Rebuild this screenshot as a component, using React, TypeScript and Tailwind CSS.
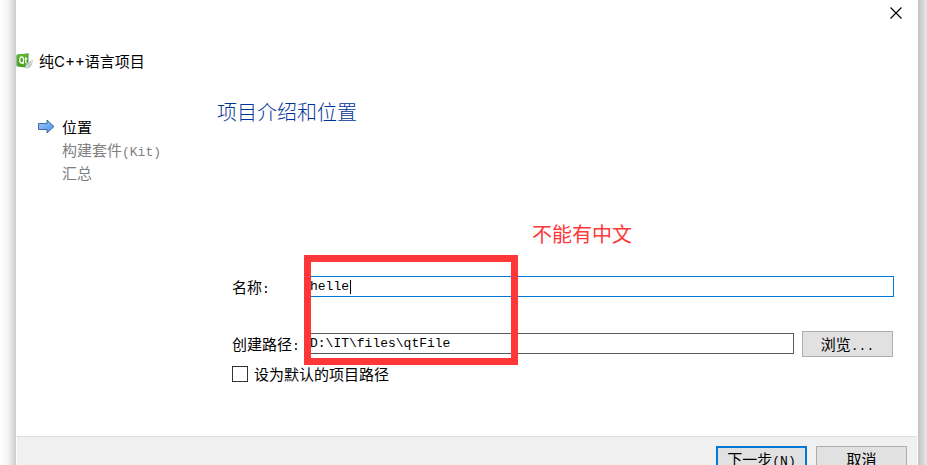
import type { ReactNode } from "react";
import clsx from "clsx";

function Mono({ children }: { children: ReactNode }) {
  return <span className="font-['Liberation_Mono',monospace] text-[13px] leading-none">{children}</span>;
}

function QtIcon() {
  return (
    <svg width="17" height="16" viewBox="0 0 17 16" aria-hidden>
      <path d="M1.500 1.500 12.500.5v10.500L9 14.500l-7.500-1z" fill="#45a51c" />
      <path d="M.5 2.500 1.500 1.500v12l-1-.5z" fill="#2d7d12" />
      <path d="M1.500 1.500 12.500.5v2l-11 2z" fill="#5cb62e" />
      <ellipse cx="5.700" cy="7" rx="1.900" ry="3.200" fill="none" stroke="#fff" strokeWidth="1.300" />
      <path d="m6 9 1.600 2.200M9.800 3.800v5.400q0 .9 1.200.8M8.700 5.800h2.600" fill="none" stroke="#fff" strokeWidth="1.200" />
      <path d="M16.800 6.500c-3 2-7 3.500-7.500 6.500-.2 1.600 1 2.700 2.500 2.400 3.300-.6 4.800-4.400 5-8.900z" fill="#c4c4c4" />
      <path d="M16.300 7.500c-1.500 3-3.500 5-6 6.800" fill="none" stroke="#ececec" />
    </svg>
  );
}

function ArrowIcon() {
  return (
    <svg width="17" height="15" viewBox="0 0 17 15" aria-hidden>
      <defs>
        <linearGradient id="arrow" x1="0" x2="1" y1="0" y2="1">
          <stop offset="0" stopColor="#9fccfa" />
          <stop offset="1" stopColor="#438ceb" />
        </linearGradient>
      </defs>
      <path d="M.5 4.500h8.500v-3.500l7 6.500-7 6.500v-3.500h-8.500z" fill="url(#arrow)" stroke="#44699c" />
    </svg>
  );
}

const steps = [
  { label: "位置", active: true },
  { label: "构建套件", suffix: "(Kit)" },
  { label: "汇总" },
];

const button = "h-[26px] w-[91px] shrink-0 bg-[#e1e1e1] text-center leading-5";
const input = "h-[21px] min-w-0 border bg-white px-[3px] font-['Liberation_Mono',monospace] text-[13px] outline-none";

export default function App() {
  return (
    <div className="flex h-screen overflow-hidden bg-white font-['Noto_Sans_CJK_SC',sans-serif] text-[15px] leading-[23px] text-black">
      <div className="w-4 shrink-0 bg-linear-to-r from-white via-[#f3f3f3] to-[#cdcdcd]" />

      <div className="flex min-w-0 flex-1 flex-col">
        <div className="flex h-12 shrink-0 items-start justify-end px-4 pt-[7px]">
          <button type="button" aria-label="关闭">
            <svg width="12" height="12" viewBox="0 0 12 12" className="block">
              <path d="m.5.500 11 11m0-11-11 11" stroke="#000" strokeWidth="1.200" />
            </svg>
          </button>
        </div>

        <header className="flex h-[26px] shrink-0 items-center gap-[6px]">
          <QtIcon />
          <h1 className="font-['Inter','Noto_Sans_CJK_SC',sans-serif] whitespace-nowrap">纯C++语言项目</h1>
        </header>

        <main className="flex h-[362px] shrink-0 pr-6">
          <ul className="w-[201px] shrink-0 pt-[41px] pl-[22px]">
            {steps.map((step) => (
              <li key={step.label} className={clsx("flex h-[23px] items-center gap-2", step.active ? "text-black" : "text-[#808080]")}>
                <span className="w-4 shrink-0">{step.active && <ArrowIcon />}</span>
                <span className="whitespace-nowrap">
                  {step.label}
                  {step.suffix && <Mono>{step.suffix}</Mono>}
                </span>
              </li>
            ))}
          </ul>

          <section className="min-w-0 flex-1 pt-6">
            <h2 className="text-xl leading-7 font-light text-[#003399]">项目介绍和位置</h2>

            <form className="relative mt-[150px] pl-[15px]" onSubmit={(e) => e.preventDefault()}>
              <div className="flex h-[21px] items-center">
                <label htmlFor="name" className="w-[74px] shrink-0 leading-5">
                  名称<Mono>:</Mono>
                </label>
                <div className="relative flex flex-1">
                  <input id="name" defaultValue="helle" className={clsx(input, "flex-1 border-[#0078d7]")} />
                  <span className="absolute top-1 left-11 h-[14px] w-px bg-black" />
                </div>
              </div>

              <div className="mt-[34px] flex items-start pr-px">
                <label htmlFor="path" className="w-[74px] shrink-0 pt-px whitespace-nowrap">
                  创建路径<Mono>:</Mono>
                </label>
                <input id="path" defaultValue="D:\IT\files\qtFile" className={clsx(input, "mt-0.5 mr-2 flex-1 border-[#5a5a5a]")} />
                <button type="button" className={clsx(button, "border border-[#adadad]")}>
                  浏览<Mono>...</Mono>
                </button>
              </div>

              <label className="mt-[5px] flex items-center gap-[6px]">
                <input type="checkbox" className="size-4 appearance-none border border-[#333] bg-white" />
                设为默认的项目路径
              </label>

              {/* red callout over the two fields */}
              <div className="pointer-events-none absolute -top-[21px] left-[87px] h-[110px] w-[214px] border-[7px] border-[#fe3838]" />
              <p className="pointer-events-none absolute -top-14 left-[315px] text-xl leading-7 text-[#fe3838]">不能有中文</p>
            </form>
          </section>
        </main>

        <footer className="mx-px flex h-14 shrink-0 justify-end gap-[9px] border-t border-[#dfdfdf] bg-[#f0f0f0] pt-[9px] pr-[10px]">
          <button type="button" className={clsx(button, "border-2 border-[#0078d7]")}>
            下一步<Mono>(<u>N</u>)</Mono>
          </button>
          <button type="button" className={clsx(button, "border border-[#adadad]")}>取消</button>
        </footer>
      </div>

      <div className="w-[9px] shrink-0 bg-linear-to-r from-[#c2c2c2] to-[#e8e8e8]" />
    </div>
  );
}
